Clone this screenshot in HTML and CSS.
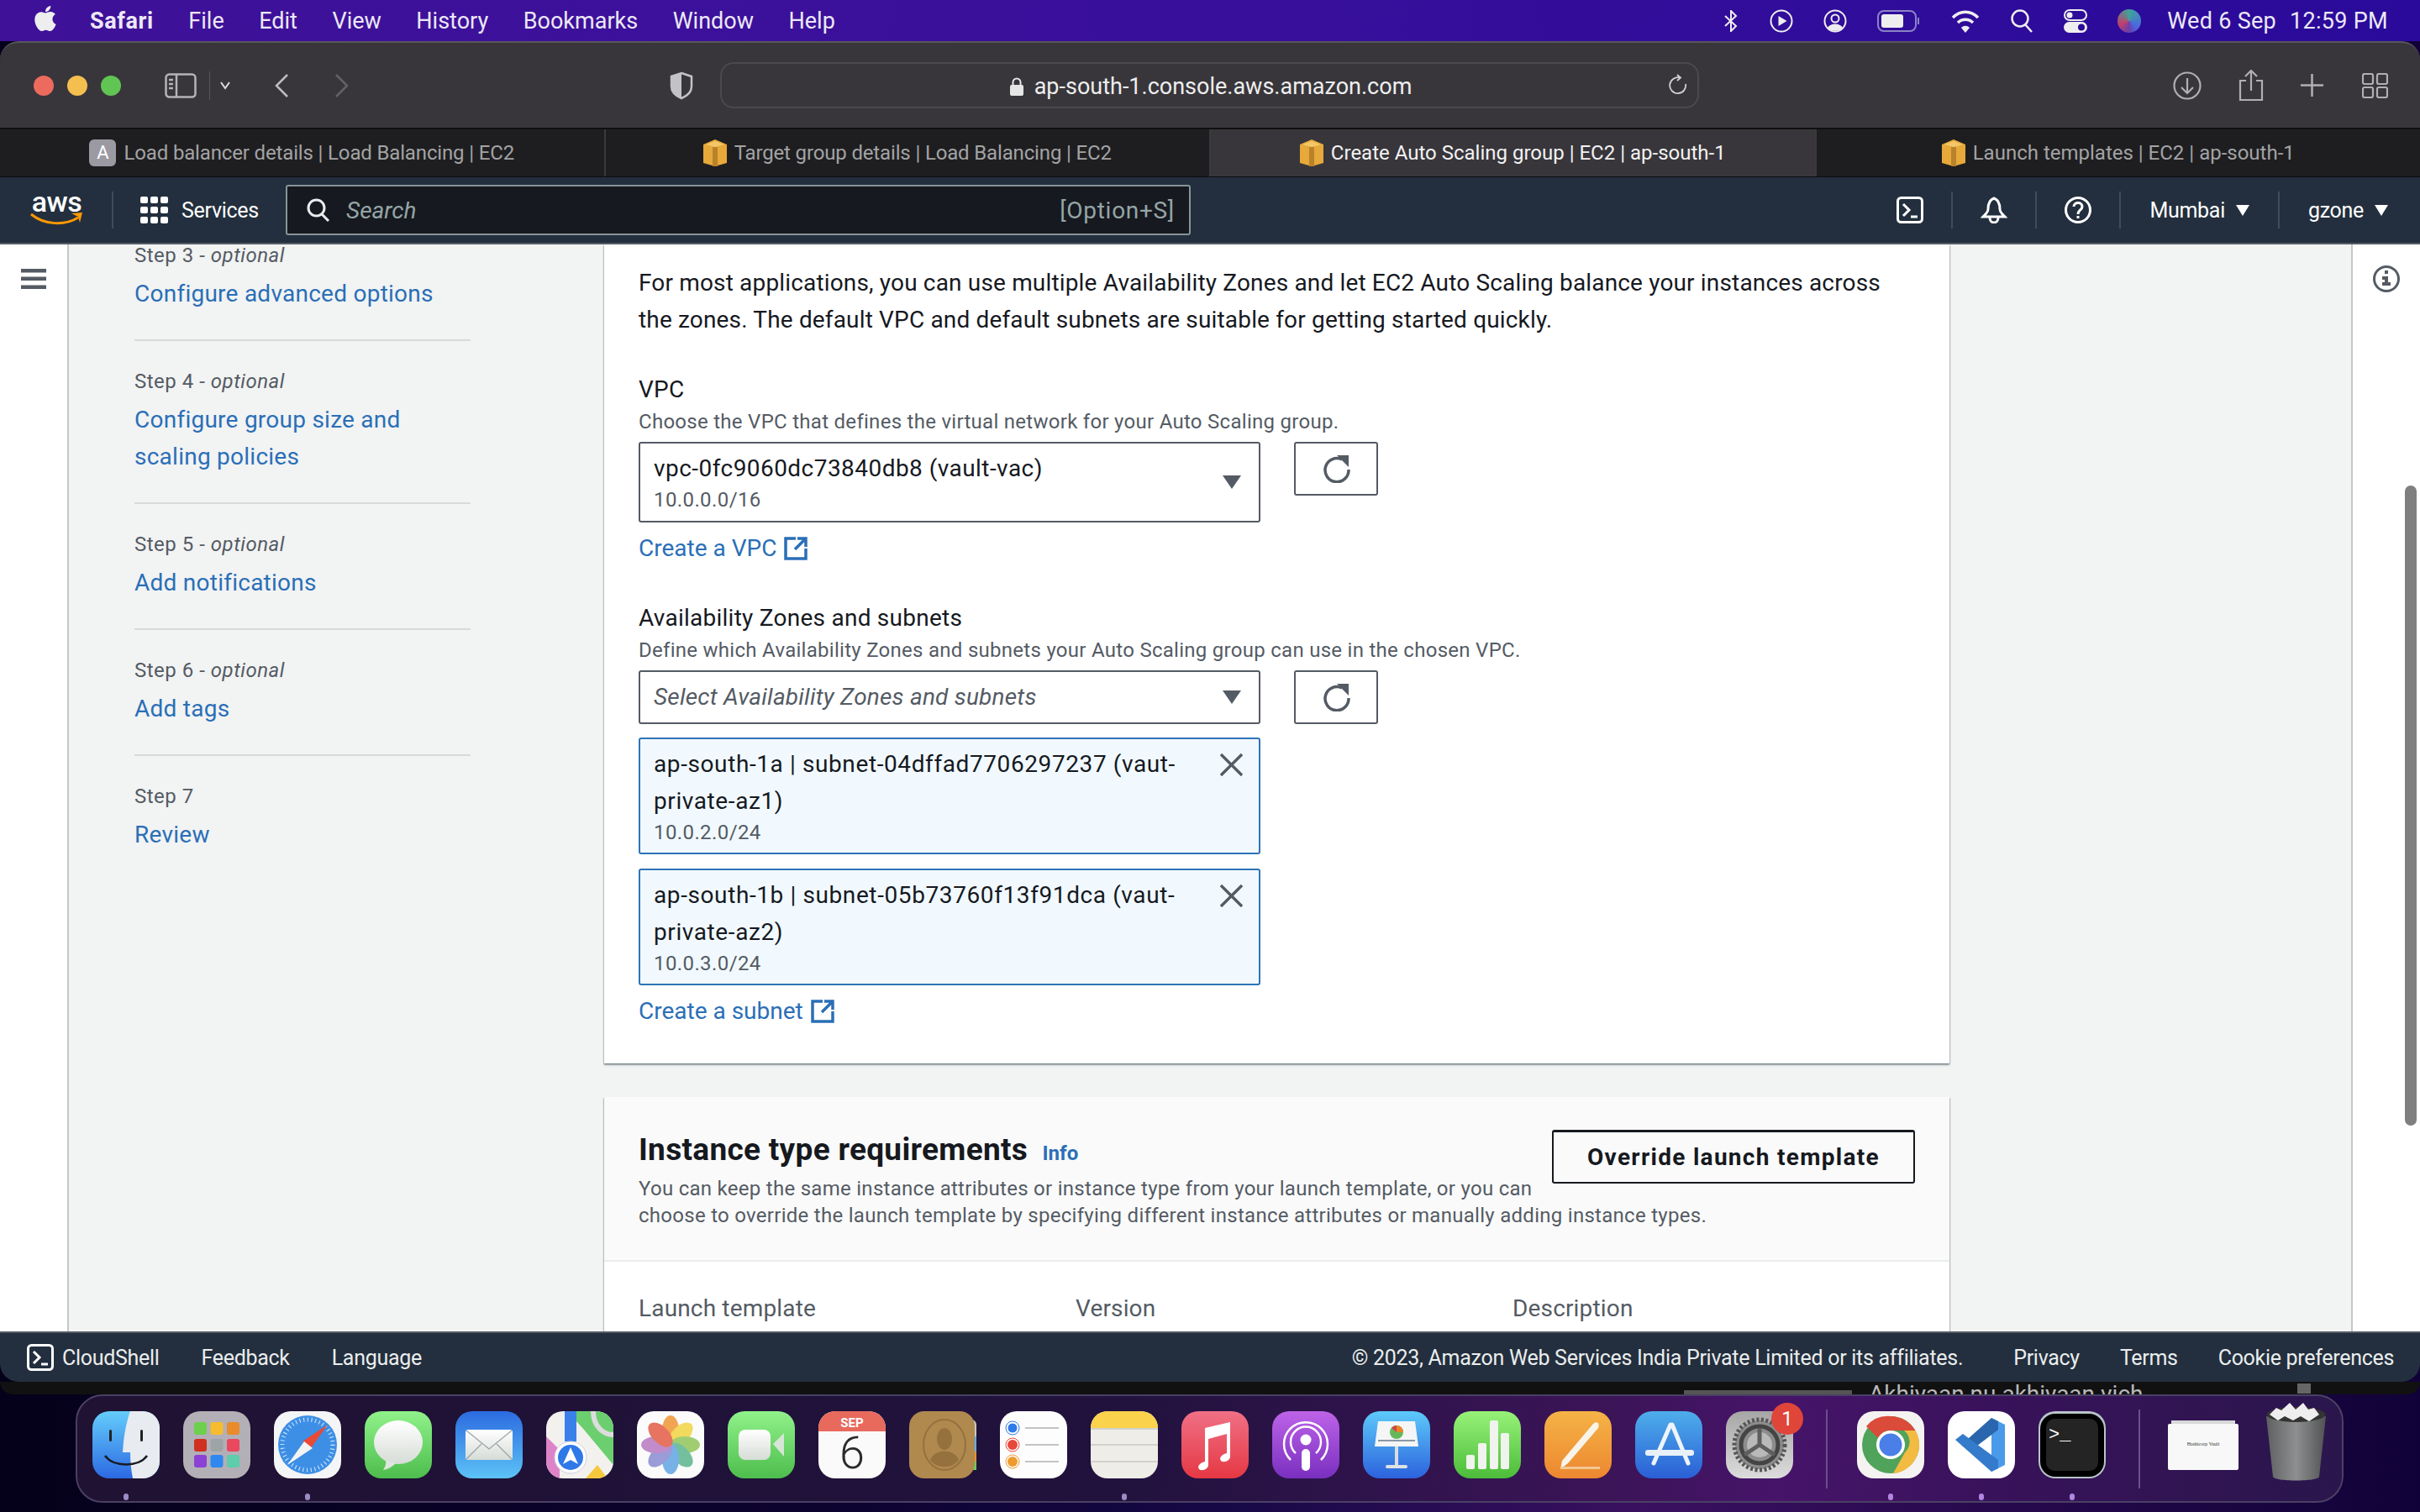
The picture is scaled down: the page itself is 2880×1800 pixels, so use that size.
FILE: index.html
```html
<!DOCTYPE html>
<html lang="en">
<head>
<meta charset="utf-8">
<title>Create Auto Scaling group | EC2 | ap-south-1</title>
<link rel="stylesheet" href="styles.css">
</head>
<body>
<header class="menubar">
  <svg class="apple" viewBox="0 0 24 24"><path fill="#eee" d="M17.05 20.28c-.98.95-2.05.8-3.08.35-1.09-.46-2.09-.48-3.24 0-1.44.62-2.2.44-3.06-.35C2.79 15.25 3.51 7.59 9.05 7.31c1.35.07 2.29.74 3.08.8 1.18-.24 2.31-.93 3.57-.84 1.51.12 2.65.72 3.4 1.8-3.12 1.87-2.38 5.98.48 7.13-.57 1.5-1.31 2.99-2.54 4.09zM12.03 7.25c-.15-2.23 1.66-4.07 3.74-4.25.29 2.58-2.34 4.5-3.74 4.25z"/></svg>
  <b class="menu-app">Safari</b><span>File</span><span>Edit</span><span>View</span><span>History</span><span>Bookmarks</span><span>Window</span><span>Help</span>
  <div class="status">
    <svg width="20" height="26" viewBox="0 0 20 26" fill="none" stroke="#eee" stroke-width="2"><path d="M3 7l13 12-6 6V1l6 6L3 19"/></svg>
    <svg width="28" height="28" viewBox="0 0 28 28" fill="none" stroke="#eee" stroke-width="2"><circle cx="14" cy="14" r="12.5"/><path fill="#eee" stroke="none" d="M10.500 8l10 6-10 6z"/></svg>
    <svg width="28" height="28" viewBox="0 0 28 28" fill="none" stroke="#eee" stroke-width="2"><circle cx="14" cy="14" r="12.500"/><circle cx="14" cy="11" r="4.500"/><path fill="#eee" stroke="none" d="M5 22c3-6 15-6 18 0-4 5-14 5-18 0z"/></svg>
    <svg width="52" height="26" viewBox="0 0 52 26" fill="none"><rect x="1" y="1" width="45" height="24" rx="7" stroke="#8b83c4" stroke-width="2"/><rect x="5" y="5" width="26" height="16" rx="3" fill="#eee"/><rect x="48" y="9" width="2" height="8" fill="#8b83c4"/></svg>
    <svg width="34" height="28" viewBox="0 0 34 28" fill="none" stroke="#eee" stroke-width="3.500"><path d="M2 10c9-9 21-9 30 0M8 16c5-5 13-5 18 0"/><path fill="#eee" stroke="none" d="M17 28l-5-6c3-3 7-3 10 0z"/></svg>
    <svg width="28" height="28" viewBox="0 0 28 28" fill="none" stroke="#eee" stroke-width="2.500"><circle cx="12" cy="11" r="9.500"/><path d="M18 18l8 9"/></svg>
    <svg width="28" height="28" viewBox="0 0 28 28"><rect x="1" y="1" width="26" height="12" rx="6" fill="none" stroke="#eee" stroke-width="2"/><circle cx="7" cy="7" r="3.500" fill="#eee"/><rect y="15" width="28" height="13" rx="6.500" fill="#eee"/><circle cx="21" cy="21.500" r="4" fill="#2a0a9a"/></svg>
    <span class="siri"></span>
    <span class="clock">Wed 6 Sep</span><span class="clock">12:59 PM</span>
  </div>
</header>

<div class="window">
  <div class="toolbar">
    <i class="light red"></i><i class="light yellow"></i><i class="light green"></i>
    <svg class="tb-sidebar" width="38" height="30" viewBox="0 0 38 30" fill="none" stroke="#b4b4b6" stroke-width="2.500"><rect x="1.500" y="1.500" width="35" height="27" rx="4"/><path d="M14 2v26M5 8h5M5 13h5M5 18h5"/></svg>
    <i class="tb-sep"></i>
    <svg class="tb-chev" width="12" height="10" viewBox="0 0 12 10" fill="none" stroke="#dcdcdc" stroke-width="2"><path d="M1 1l5 7 5-7"/></svg>
    <svg class="tb-back" width="16" height="28" viewBox="0 0 16 28" fill="none" stroke="#bdbdbf" stroke-width="2.500"><path d="M15 1L2 14l13 13"/></svg>
    <svg class="tb-fwd" width="16" height="28" viewBox="0 0 16 28" fill="none" stroke="#636265" stroke-width="2.500"><path d="M1 1l13 13L1 27"/></svg>
    <svg class="tb-shield" width="28" height="34" viewBox="0 0 28 34"><path fill="#38363b" stroke="#c3c3c7" stroke-width="2.500" d="M14 2l12 4v12c0 7-5 11-12 14-7-3-12-7-12-14V6z"/><path fill="#c3c3c7" d="M14 2L2 6v12c0 7 5 11 12 14z"/></svg>
    <div class="urlbar">
      <div class="url">
        <svg width="18" height="22" viewBox="0 0 18 22"><path fill="none" stroke="#e6e6e6" stroke-width="2" d="M4.500 10V6a4.500 4.500 0 019 0v4"/><rect x="1" y="9" width="16" height="13" rx="2" fill="#e6e6e6"/></svg>
        <span>ap-south-1.console.aws.amazon.com</span>
      </div>
      <svg class="reload" width="22" height="26" viewBox="0 0 22 26" fill="none" stroke="#d0d0d2" stroke-width="1.800"><path d="M13 4.500A9.500 9.500 0 1 0 20 12M10 1l4 3.500L10 8"/></svg>
    </div>
    <svg class="tb-dl" width="34" height="34" viewBox="0 0 34 34" fill="none" stroke="#b0b0b2" stroke-width="2.200"><circle cx="17" cy="17" r="15.500"/><path d="M17 8v18M10 19l7 7 7-7"/></svg>
    <svg class="tb-share" width="30" height="38" viewBox="0 0 30 38" fill="none" stroke="#b0b0b2" stroke-width="2.200"><path d="M9 13H2v23h26V13h-7M15 25V2M8 8l7-7 7 7"/></svg>
    <svg class="tb-plus" width="27" height="27" viewBox="0 0 27 27" fill="none" stroke="#b0b0b2" stroke-width="2.500"><path d="M13.500 0v27M0 13.500h27"/></svg>
    <svg class="tb-grid" width="31" height="30" viewBox="0 0 31 30" fill="none" stroke="#b0b0b2" stroke-width="2.200"><rect x="1" y="1" width="12" height="12" rx="2"/><rect x="18" y="1" width="12" height="12" rx="2"/><rect x="1" y="17" width="12" height="12" rx="2"/><rect x="18" y="17" width="12" height="12" rx="2"/></svg>
  </div>

  <div class="tabs">
    <div class="tab"><i class="tile">A</i><span>Load balancer details | Load Balancing | EC2</span></div>
    <div class="tab"><svg class="cube" viewBox="0 0 28 32"><path fill="#e6a93a" d="M14 0l14 6v22l-14 4-14-4V6z"/><path fill="#b9822a" d="M11 9h6v23h-6z"/><path fill="#f3c768" d="M14 2l11 4-11 3L3 6z"/></svg><span>Target group details | Load Balancing | EC2</span></div>
    <div class="tab active"><svg class="cube" viewBox="0 0 28 32"><path fill="#e6a93a" d="M14 0l14 6v22l-14 4-14-4V6z"/><path fill="#b9822a" d="M11 9h6v23h-6z"/><path fill="#f3c768" d="M14 2l11 4-11 3L3 6z"/></svg><span>Create Auto Scaling group | EC2 | ap-south-1</span></div>
    <div class="tab"><svg class="cube" viewBox="0 0 28 32"><path fill="#e6a93a" d="M14 0l14 6v22l-14 4-14-4V6z"/><path fill="#b9822a" d="M11 9h6v23h-6z"/><path fill="#f3c768" d="M14 2l11 4-11 3L3 6z"/></svg><span>Launch templates | EC2 | ap-south-1</span></div>
  </div>

  <nav class="awsnav">
    <div class="logo"><span>aws</span><svg width="63" height="16" viewBox="0 0 63 16" fill="none"><path stroke="#f90" stroke-width="3" d="M1 2c16 13 40 14 56 4"/><path fill="#f90" d="M49 1l13-1-3 12-2-7z"/></svg></div>
    <i class="nav-sep"></i>
    <svg class="nav-grid" width="33" height="32" viewBox="0 0 33 32" fill="#fff"><rect width="9" height="8" rx="2"/><rect x="12" width="9" height="8" rx="2"/><rect x="24" width="9" height="8" rx="2"/><rect y="12" width="9" height="8" rx="2"/><rect x="12" y="12" width="9" height="8" rx="2"/><rect x="24" y="12" width="9" height="8" rx="2"/><rect y="24" width="9" height="8" rx="2"/><rect x="12" y="24" width="9" height="8" rx="2"/><rect x="24" y="24" width="9" height="8" rx="2"/></svg>
    <span class="services">Services</span>
    <div class="search">
      <svg width="28" height="28" viewBox="0 0 28 28" fill="none" stroke="#eaeded" stroke-width="3"><circle cx="11.500" cy="11.500" r="9.500"/><path d="M18 19l8 8"/></svg>
      <em>Search</em><span>[Option+S]</span>
    </div>
    <div class="nav-right">
      <svg width="32" height="32" viewBox="0 0 32 32" fill="none" stroke="#fff" stroke-width="3"><rect x="1.500" y="1.500" width="29" height="29" rx="4"/><path d="M8 9l7 7-7 7M17 24h8"/></svg>
      <i class="nav-sep"></i>
      <svg width="32" height="32" viewBox="0 0 32 32" fill="none" stroke="#fff" stroke-width="3"><path d="M16 2c-6 2-7 8-7 13 0 4-3 6-6 9h26c-3-3-6-5-6-9 0-5-1-11-7-13zM11 25c0 8 10 8 10 0"/></svg>
      <i class="nav-sep"></i>
      <svg width="32" height="32" viewBox="0 0 32 32" fill="none" stroke="#fff" stroke-width="3"><circle cx="16" cy="16" r="14.500"/><path d="M11 12c0-6 10-6 10 0 0 4-5 4-5 9"/><path d="M16 23v3"/></svg>
      <i class="nav-sep"></i>
      <span class="menu-pick">Mumbai<i class="caret-w"></i></span>
      <i class="nav-sep"></i>
      <span class="menu-pick">gzone<i class="caret-w"></i></span>
    </div>
  </nav>

  <div class="console">
    <aside class="rail">
      <svg width="30" height="24" viewBox="0 0 30 24" fill="#545b64"><rect width="30" height="4.500"/><rect y="9.500" width="30" height="4.500"/><rect y="19.500" width="30" height="4.500"/></svg>
    </aside>
    <div class="centre">
      <ol class="steps">
        <li><small>Step 3 - <em>optional</em></small><a>Configure advanced options</a></li>
        <li><small>Step 4 - <em>optional</em></small><a>Configure group size and<br>scaling policies</a></li>
        <li><small>Step 5 - <em>optional</em></small><a>Add notifications</a></li>
        <li><small>Step 6 - <em>optional</em></small><a>Add tags</a></li>
        <li class="last"><small>Step 7</small><a>Review</a></li>
      </ol>
      <main class="main">
        <section class="card net">
          <p>For most applications, you can use multiple Availability Zones and let EC2 Auto Scaling balance your instances across<br>the zones. The default VPC and default subnets are suitable for getting started quickly.</p>
          <h3 class="label first">VPC</h3>
          <p class="desc">Choose the VPC that defines the virtual network for your Auto Scaling group.</p>
          <div class="pick-row">
            <div class="select">
              <div class="line">vpc-0fc9060dc73840db8 (vault-vac)</div>
              <div class="sub">10.0.0.0/16</div>
              <i class="caret"></i>
            </div>
            <button class="refresh"><svg width="34" height="34" viewBox="0 0 34 34" fill="none" stroke="#545b64" stroke-width="3.500"><path d="M24 6a14 14 0 1 0 8 12"/><path fill="#545b64" stroke="none" d="M18 1h14v14z"/></svg></button>
          </div>
          <a class="ext">Create a VPC<svg width="28" height="28" viewBox="0 0 28 28" fill="none" stroke="#2a6fb7" stroke-width="3.500"><path d="M14 2H2v24h24V14M13 15L25 3M16 2h10v10"/></svg></a>
          <h3 class="label">Availability Zones and subnets</h3>
          <p class="desc">Define which Availability Zones and subnets your Auto Scaling group can use in the chosen VPC.</p>
          <div class="pick-row">
            <div class="select short">
              <div class="line placeholder">Select Availability Zones and subnets</div>
              <i class="caret"></i>
            </div>
            <button class="refresh"><svg width="34" height="34" viewBox="0 0 34 34" fill="none" stroke="#545b64" stroke-width="3.500"><path d="M24 6a14 14 0 1 0 8 12"/><path fill="#545b64" stroke="none" d="M18 1h14v14z"/></svg></button>
          </div>
          <div class="token">
            <div class="line wide-line">ap-south-1a | subnet-04dffad7706297237 (vaut-<br>private-az1)</div>
            <div class="sub">10.0.2.0/24</div>
            <svg class="close" width="27" height="27" viewBox="0 0 28 28" fill="none" stroke="#545b64" stroke-width="3.500"><path d="M1 1l26 26M27 1L1 27"/></svg>
          </div>
          <div class="token">
            <div class="line wide-line">ap-south-1b | subnet-05b73760f13f91dca (vaut-<br>private-az2)</div>
            <div class="sub">10.0.3.0/24</div>
            <svg class="close" width="27" height="27" viewBox="0 0 28 28" fill="none" stroke="#545b64" stroke-width="3.500"><path d="M1 1l26 26M27 1L1 27"/></svg>
          </div>
          <a class="ext">Create a subnet<svg width="28" height="28" viewBox="0 0 28 28" fill="none" stroke="#2a6fb7" stroke-width="3.500"><path d="M14 2H2v24h24V14M13 15L25 3M16 2h10v10"/></svg></a>
        </section>
        <section class="card reqs">
          <header class="reqs-head">
            <button class="override">Override launch template</button>
            <h2>Instance type requirements <a>Info</a></h2>
            <p class="desc">You can keep the same instance attributes or instance type from your launch template, or you can<br>choose to override the launch template by specifying different instance attributes or manually adding instance types.</p>
          </header>
          <div class="cols"><span>Launch template</span><span>Version</span><span>Description</span></div>
        </section>
      </main>
    </div>
    <aside class="tools">
      <svg width="32" height="32" viewBox="0 0 32 32"><circle cx="16" cy="16" r="14.500" fill="none" stroke="#545b64" stroke-width="3"/><path fill="#545b64" d="M14 6h4v4h-4zM11 13h7v7h3v4H11v-4h3v-3h-3z"/></svg>
    </aside>
    <i class="scrollbar"></i>
  </div>

  <footer class="foot">
    <svg width="32" height="32" viewBox="0 0 32 32" fill="none" stroke="#fff" stroke-width="3"><rect x="1.500" y="1.500" width="29" height="29" rx="4"/><path d="M8 9l7 7-7 7M17 24h8"/></svg>
    <span class="foot-cs">CloudShell</span><span class="foot-fb">Feedback</span><span class="foot-lang">Language</span>
    <div class="foot-right"><span class="copy">© 2023, Amazon Web Services India Private Limited or its affiliates.</span><span class="wide">Privacy</span><span>Terms</span><span>Cookie preferences</span></div>
  </footer>
</div>

<div class="behind"><span class="bits"></span><span class="behind-text">Akhiyaan nu akhiyaan vich</span><i class="behind-square"></i></div>

<nav class="dock">
  <div class="app"><svg viewBox="0 0 80 80"><defs><linearGradient id="finder" x1="0" y1="0" x2="0" y2="1"><stop offset="0" stop-color="#64cdfb"/><stop offset="1" stop-color="#2c69e2"/></linearGradient><linearGradient id="greenG" x1="0" y1="0" x2="0" y2="1"><stop offset="0" stop-color="#90f28a"/><stop offset="1" stop-color="#4dbd4d"/></linearGradient><linearGradient id="blueG" x1="0" y1="0" x2="0" y2="1"><stop offset="0" stop-color="#2c6be0"/><stop offset="1" stop-color="#5cc3f6"/></linearGradient><linearGradient id="blueD" x1="0" y1="0" x2="0" y2="1"><stop offset="0" stop-color="#5dcafa"/><stop offset="1" stop-color="#2c62dd"/></linearGradient><linearGradient id="whiteG" x1="0" y1="0" x2="0" y2="1"><stop offset="0" stop-color="#fff"/><stop offset="1" stop-color="#d6dcd6"/></linearGradient></defs><rect width="80" height="80" rx="20" fill="url(#finder)"/><path fill="#e8ebef" d="M45 0h15a20 20 0 0120 20v40a20 20 0 01-20 20H48c-2-10-3-20-3-31H36C37 30 40 14 45 0z"/><rect x="20" y="22" width="3" height="14" rx="1.500" fill="#222"/><rect x="57" y="22" width="3" height="14" rx="1.500" fill="#222"/><path d="M15 53c10 14 40 14 50 0" fill="none" stroke="#1a1a22" stroke-width="2.500"/></svg><i class="dot"></i></div>
  <div class="app"><svg viewBox="0 0 80 80"><rect width="80" height="80" rx="20" fill="#b3afb6"/><rect x="13" y="13" width="15" height="15" rx="3" fill="#6dd04c"/><rect x="32.500" y="13" width="15" height="15" rx="3" fill="#f6bb2f"/><rect x="52" y="13" width="15" height="15" rx="3" fill="#e98b2a"/><rect x="13" y="33" width="15" height="15" rx="3" fill="#d0301f"/><rect x="32.500" y="33" width="15" height="15" rx="3" fill="#9da4a6"/><rect x="52" y="33" width="15" height="15" rx="3" fill="#e9485f"/><rect x="13" y="52" width="15" height="15" rx="3" fill="#8b40d6"/><rect x="32.500" y="52" width="15" height="15" rx="3" fill="#2f88f0"/><rect x="52" y="52" width="15" height="15" rx="3" fill="#5dcdaa"/></svg></div>
  <div class="app"><svg viewBox="0 0 80 80"><rect width="80" height="80" rx="20" fill="#f4f5f6"/><circle cx="40" cy="40" r="35" fill="#3d8fe6"/><circle cx="40" cy="40" r="30" fill="none" stroke="#d8ecfb" stroke-width="5" stroke-dasharray="1 3.700"/><path fill="#e84a36" d="M64 16L34 36l10 8z"/><path fill="#f4f4f4" d="M16 64l30-20-10-8z"/></svg><i class="dot"></i></div>
  <div class="app"><svg viewBox="0 0 80 80"><rect width="80" height="80" rx="20" fill="url(#greenG)"/><ellipse cx="40" cy="37" rx="29" ry="26" fill="url(#whiteG)"/><path fill="#dfe6de" d="M25 58c1 5-1 9-3 12 6-1 11-4 15-8z"/></svg></div>
  <div class="app"><svg viewBox="0 0 80 80"><rect width="80" height="80" rx="20" fill="url(#blueG)"/><rect x="12" y="22" width="56" height="36" rx="3" fill="url(#whiteG)"/><path d="M13 23l27 22 27-22M13 57l18-18M67 57L49 39" fill="none" stroke="#9ba3a8" stroke-width="1.200"/></svg></div>
  <div class="app"><svg viewBox="0 0 80 80"><clipPath id="tile"><rect width="80" height="80" rx="20"/></clipPath><g clip-path="url(#tile)"><rect width="80" height="80" fill="#f2f1ee"/><path fill="#6ccf6f" d="M0 0h80v64L45 22 25 0z"/><path fill="#dd84c8" d="M0 30l16 16v34H0z"/><path fill="#f4c93c" d="M47 80l14-16 12 16z"/><path fill="none" stroke="#dcdcdc" stroke-width="6" d="M56 0c0 18 12 28 24 28"/><path fill="#3b80ea" d="M22 0h14v36H22z"/><circle cx="29" cy="55" r="19" fill="#fff" stroke="#ccd" stroke-width="1"/><circle cx="29" cy="55" r="15" fill="#2f78e8"/><path fill="#fff" d="M29 43l9 20-9-5-9 5z"/></g></svg></div>
  <div class="app"><svg viewBox="0 0 80 80"><rect width="80" height="80" rx="20" fill="#fbfbfb"/><g opacity=".82"><ellipse cx="40" cy="23" rx="10" ry="18" fill="#f0932e"/><ellipse cx="40" cy="23" rx="10" ry="18" fill="#f2d23c" transform="rotate(45 40 40)"/><ellipse cx="40" cy="23" rx="10" ry="18" fill="#8ec454" transform="rotate(90 40 40)"/><ellipse cx="40" cy="23" rx="10" ry="18" fill="#56b38a" transform="rotate(135 40 40)"/><ellipse cx="40" cy="23" rx="10" ry="18" fill="#5aa3e2" transform="rotate(180 40 40)"/><ellipse cx="40" cy="23" rx="10" ry="18" fill="#8488d0" transform="rotate(225 40 40)"/><ellipse cx="40" cy="23" rx="10" ry="18" fill="#b674c0" transform="rotate(270 40 40)"/><ellipse cx="40" cy="23" rx="10" ry="18" fill="#e2573f" transform="rotate(315 40 40)"/></g></svg></div>
  <div class="app"><svg viewBox="0 0 80 80"><rect width="80" height="80" rx="20" fill="url(#greenG)"/><rect x="13" y="22" width="38" height="36" rx="8" fill="url(#whiteG)"/><path fill="#d6e6d6" d="M54 39l13-13v28z"/></svg></div>
  <div class="app"><svg viewBox="0 0 80 80"><clipPath id="cal"><rect width="80" height="80" rx="20"/></clipPath><g clip-path="url(#cal)"><rect width="80" height="80" fill="#fafafa"/><rect width="80" height="24" fill="#e76a5d"/></g><text x="40" y="19" text-anchor="middle" class="cal-m">SEP</text><text x="40" y="68" text-anchor="middle" class="cal-d">6</text></svg></div>
  <div class="app"><svg viewBox="0 0 80 80"><rect x="60" y="10" width="20" height="60" rx="6" fill="#c9c7c2"/><rect x="76" y="30" width="4" height="18" fill="#5fb0ee"/><rect x="76" y="48" width="4" height="12" fill="#f0902c"/><rect x="76" y="60" width="4" height="10" fill="#6acc5a"/><rect width="78" height="80" rx="18" fill="#b0894f"/><ellipse cx="42" cy="40" rx="25" ry="30" fill="none" stroke="#94713d" stroke-width="2"/><ellipse cx="42" cy="33" rx="9" ry="13" fill="#94713d"/><path fill="#94713d" d="M25 58c6-14 28-14 34 0-8 11-26 11-34 0z"/></svg></div>
  <div class="app"><svg viewBox="0 0 80 80"><rect width="80" height="80" rx="20" fill="#fdfdfd"/><circle cx="15" cy="20" r="6" fill="#2f7be8" stroke="#fff" stroke-width="1"/><circle cx="15" cy="20" r="8" fill="none" stroke="#2f7be8"/><circle cx="15" cy="40" r="6" fill="#e8483a"/><circle cx="15" cy="40" r="8" fill="none" stroke="#e8483a"/><circle cx="15" cy="60" r="6" fill="#ef9a2e"/><circle cx="15" cy="60" r="8" fill="none" stroke="#ef9a2e"/><path d="M30 20h40M30 40h40M30 60h40" stroke="#c3c3c3" stroke-width="2"/></svg></div>
  <div class="app"><svg viewBox="0 0 80 80"><clipPath id="notes"><rect width="80" height="80" rx="20"/></clipPath><g clip-path="url(#notes)"><rect width="80" height="80" fill="#eeede8"/><rect width="80" height="20" fill="#fbd24b"/><path d="M0 21h80M0 40h80M0 60h80" stroke="#c9c8c3" stroke-width="1.500"/></g></svg><i class="dot"></i></div>
  <div class="app"><svg viewBox="0 0 80 80"><defs><linearGradient id="music" x1="0" y1="0" x2="0" y2="1"><stop offset="0" stop-color="#f07085"/><stop offset="1" stop-color="#e53843"/></linearGradient></defs><rect width="80" height="80" rx="20" fill="url(#music)"/><path fill="#fff" d="M58 13v41c0 5-8 8-11 5-3-4 2-8 7-9V27l-22 6v31c0 5-8 8-11 5-3-4 2-8 7-9V20z"/></svg></div>
  <div class="app"><svg viewBox="0 0 80 80"><defs><linearGradient id="pod" x1="0" y1="0" x2="0" y2="1"><stop offset="0" stop-color="#bd63e8"/><stop offset="1" stop-color="#7a2fc0"/></linearGradient></defs><rect width="80" height="80" rx="20" fill="url(#pod)"/><g fill="none" stroke="#fff" stroke-width="2.500"><path d="M22 58a26 26 0 1 1 36 0"/><path d="M28 50a18 18 0 1 1 24 0"/></g><circle cx="40" cy="34" r="6.500" fill="#fff"/><rect x="35" y="45" width="10" height="26" rx="5" fill="#fff"/></svg></div>
  <div class="app"><svg viewBox="0 0 80 80"><rect width="80" height="80" rx="20" fill="url(#blueD)"/><rect x="38" y="30" width="4" height="36" fill="#d8dde0"/><rect x="27" y="64" width="26" height="4" rx="2" fill="#dfe2e4"/><path fill="#f4f5f5" d="M18 12h44l4 30H14z"/><circle cx="40" cy="25" r="8" fill="#65b85a"/><path fill="#e8852a" d="M40 17a8 8 0 018 8h-8z"/><path fill="#d5434a" d="M40 17a8 8 0 00-6 3l6 5z"/><rect x="18" y="34" width="44" height="2" fill="#8a9aa8"/></svg></div>
  <div class="app"><svg viewBox="0 0 80 80"><defs><linearGradient id="num" x1="0" y1="0" x2="0" y2="1"><stop offset="0" stop-color="#97f278"/><stop offset="1" stop-color="#4cbc3a"/></linearGradient></defs><rect width="80" height="80" rx="20" fill="url(#num)"/><g fill="#f0f3ee"><rect x="15" y="52" width="10" height="17" rx="2"/><rect x="29" y="38" width="10" height="31" rx="2"/><rect x="43" y="11" width="10" height="58" rx="2"/><rect x="56" y="26" width="10" height="43" rx="2"/></g></svg></div>
  <div class="app"><svg viewBox="0 0 80 80"><defs><linearGradient id="pages" x1="0" y1="0" x2="0" y2="1"><stop offset="0" stop-color="#f5b346"/><stop offset="1" stop-color="#ec8730"/></linearGradient></defs><rect width="80" height="80" rx="20" fill="url(#pages)"/><path fill="#f8f4ea" d="M58 15c5-4 8 0 6 5L28 62l-9 7 2-10z"/><rect x="20" y="66" width="46" height="3" fill="#f3c792"/></svg></div>
  <div class="app"><svg viewBox="0 0 80 80"><defs><linearGradient id="store" x1="0" y1="0" x2="0" y2="1"><stop offset="0" stop-color="#4eaeeb"/><stop offset="1" stop-color="#2a5fd6"/></linearGradient></defs><rect width="80" height="80" rx="20" fill="url(#store)"/><g stroke="#eef4fa" stroke-width="5" stroke-linecap="round"><path d="M44 16l19 46"/><path d="M42 16L22 62"/></g><rect x="12" y="46" width="58" height="7" rx="3" fill="#e8f0f8"/></svg></div>
  <div class="app"><svg viewBox="0 0 80 80"><defs><linearGradient id="prefs" x1="0" y1="0" x2="0" y2="1"><stop offset="0" stop-color="#a6a6a6"/><stop offset="1" stop-color="#dcdcdc"/></linearGradient></defs><rect width="80" height="80" rx="20" fill="url(#prefs)"/><circle cx="40" cy="40" r="29" fill="#8c8c8c"/><circle cx="40" cy="40" r="30" fill="none" stroke="#555" stroke-width="5" stroke-dasharray="3 2.500"/><circle cx="40" cy="40" r="22" fill="none" stroke="#444" stroke-width="5"/><circle cx="40" cy="40" r="15" fill="#b9b9b9"/><path d="M40 40V20M40 40L22 52M40 40l18 12" stroke="#5e5e5e" stroke-width="5"/></svg><b class="badge">1</b></div>
  <i class="dock-sep"></i>
  <div class="app after-sep"><svg viewBox="0 0 80 80"><rect width="80" height="80" rx="20" fill="#f5f3f1"/><circle cx="40" cy="40" r="34" fill="#4fa35a"/><path fill="#db4b3a" d="M40 6a34 34 0 0129.400 17H40a17 17 0 00-15 9L11 18A34 34 0 0140 6z"/><path fill="#f3bb41" d="M69.400 23A34 34 0 0143 74l14-25a17 17 0 00-1-26z"/><circle cx="40" cy="40" r="17" fill="#fff"/><circle cx="40" cy="40" r="13.500" fill="#4a7fe8"/></svg><i class="dot bright"></i></div>
  <div class="app"><svg viewBox="0 0 80 80"><rect width="80" height="80" rx="20" fill="#fff"/><path fill="#4a9aea" d="M52 8l16 8v48l-16 8z"/><path fill="#2a66ad" d="M52 8l8 4v10L26 48l-10-8z"/><path fill="#347bcb" d="M52 72l8-4V58L18 27l-9 7z"/></svg><i class="dot bright"></i></div>
  <div class="app"><svg viewBox="0 0 80 80"><rect width="80" height="80" rx="20" fill="#b8c4c8"/><rect x="2" y="3" width="76" height="75" rx="18" fill="#000"/><rect x="9" y="9" width="62" height="62" rx="10" fill="#242424"/><text x="12" y="34" class="term">&gt;_</text></svg><i class="dot bright"></i></div>
  <i class="dock-sep"></i>
  <div class="doc"><svg viewBox="0 0 84 59"><rect x="4" y="0" width="76" height="8" fill="#d8d8d8"/><rect width="84" height="55" y="4" rx="2" fill="#f8f8f8"/><text x="42" y="30" text-anchor="middle" class="doc-t">Hashicorp Vault</text></svg></div>
  <div class="trash"><svg viewBox="0 0 75 93"><defs><linearGradient id="glass" x1="0" y1="0" x2="1" y2="0"><stop offset="0" stop-color="#5d5f60"/><stop offset=".5" stop-color="#8d8f90"/><stop offset="1" stop-color="#505253"/></linearGradient></defs><path fill="url(#glass)" d="M2 16h71l-8 72c-1 6-54 6-55 0z"/><ellipse cx="37.500" cy="14" rx="35" ry="9" fill="#333"/><path fill="#eee" d="M6 14l8-8 6 3 10-9 7 8 9-8 6 8 7-2 6 8-12 8-10-6-9 5-10-5-8 5z"/></svg></div>
</nav>
</body>
</html>
```

FILE: styles.css
```css
* { box-sizing: border-box; }
html, body { margin: 0; padding: 0; }
body {
  width: 2880px; height: 1800px; overflow: hidden;
  font-family: Roboto, "Liberation Sans", sans-serif;
  background: linear-gradient(90deg, #05011a 0, #0d0330 35%, #150845 50%, #3a1060 68%, #2a0a50 80%, #100238 100%);
}
i { font-style: normal; display: block; }
svg { display: block; flex: none; }

/* macOS menu bar */
.menubar {
  height: 49px; display: flex; align-items: center; gap: 41.500px;
  padding-left: 34px; color: #ece8f6; font-size: 27px;
  background: linear-gradient(90deg, #3f1199 0, #3a109b 40%, #2a0a9a 100%);
}
.apple { width: 40px; height: 40px; margin-bottom: 6px; margin-right: -8.500px; }
.menu-app { font-weight: 700; letter-spacing: .6px; }
.status { margin-left: auto; padding-right: 38px; display: flex; align-items: center; gap: 36px; }
.siri { width: 28px; height: 28px; margin-right: -5px; border-radius: 50%; background: conic-gradient(#3fa39a, #4a6ae0 35%, #6a3fb0 50%, #c0406a 70%, #3fa39a); }
.clock { letter-spacing: .3px; }
.clock + .clock { margin-left: -20px; }

/* Safari window */
.window { height: 1596px; display: flex; flex-direction: column; }
.toolbar {
  height: 105px; flex: none; display: flex; align-items: center; padding-left: 40px;
  background: #38363b; border-top: 2px solid #57565a; border-bottom: 2px solid #0f0f10;
  border-radius: 22px 22px 0 0;
}
.light { width: 24px; height: 24px; border-radius: 50%; margin-right: 16px; }
.red { background: #ec6a5e; } .yellow { background: #f4bf4f; } .green { background: #61c554; }
.tb-sidebar { margin-left: 36px; }
.tb-sep { width: 1px; height: 34px; background: #565559; margin-left: 15px; }
.tb-chev { margin-left: 12px; }
.tb-back { margin-left: 53px; }
.tb-fwd { margin-left: 56px; }
.tb-shield { margin-left: 382px; }
.urlbar {
  width: 1165px; height: 55px; margin-left: 32px; display: flex; align-items: center; justify-content: center;
  border: 2px solid #4b494e; border-radius: 16px; position: relative;
}
.url { display: flex; align-items: center; gap: 12px; color: #eeeeee; font-size: 27px; margin-left: 2px; padding-top: 2px; }
.reload { position: absolute; right: 12px; top: 12px; }
.tb-dl { margin-left: 564px; }
.tb-share { margin-left: 44px; }
.tb-plus { margin-left: 44px; }
.tb-grid { margin-left: 46px; }

.tabs { height: 57px; flex: none; display: flex; background: #1e1e20; border-bottom: 1px solid #0c0c0d; }
.tab {
  flex: 1; display: flex; align-items: center; justify-content: center; gap: 9px;
  color: #a3a3a5; font-size: 24px; letter-spacing: -.15px; border-left: 2px solid #3a3a3c;
}
.tab:first-child { border-left: 0; }
.tab.active { background: #38363b; color: #f2f2f2; }
.tab.active, .tab:last-child { letter-spacing: 0; }
.tile { width: 32px; height: 32px; border-radius: 6px; background: #9b9aa3; color: #fff; font-size: 22px; text-align: center; line-height: 32px; }
.cube { width: 28px; height: 32px; }

/* AWS console top bar */
.awsnav {
  height: 80px; flex: none; display: flex; align-items: center; padding: 0 37px 0 36px;
  background: #232f3e; border-bottom: 2px solid #545b64; color: #fff; font-size: 25px; letter-spacing: -.3px;
}
.logo { width: 63px; height: 40px; margin-top: -2px; }
.logo span { display: block; font: 500 34px/23px Roboto, sans-serif; letter-spacing: -.5px; text-align: center; }
.logo svg { margin-top: 1px; }
.nav-sep { width: 2px; height: 44px; background: #414c59; }
.logo + .nav-sep { margin-left: 34px; }
.nav-grid { margin-left: 32px; }
.services { width: 140px; padding-left: 16px; }
.search {
  width: 1077px; height: 60px; display: flex; align-items: center; padding: 0 17px 0 23px; gap: 19px;
  background: #16191f; border: 2px solid #879596; border-radius: 3px; color: #95a5a6; font-size: 28px; letter-spacing: 0;
}
.search span { margin-left: auto; letter-spacing: .7px; }
.nav-right { margin-left: auto; display: flex; align-items: center; gap: 33px; }
.menu-pick { display: flex; align-items: center; gap: 13px; margin: 0 1px; }
.caret-w { width: 0; height: 0; border: 8px solid transparent; border-top: 13px solid #fff; border-bottom: 0; }

/* Console body */
.console { height: 1294px; flex: none; display: flex; position: relative; overflow: hidden; background: #f2f3f3; }
.rail { width: 82px; flex: none; background: #fff; border-right: 2px solid #c4c8c9; padding: 29px 0 0 25px; }
.centre { flex: 1; display: flex; min-width: 0; }
.tools { width: 82px; flex: none; background: #fff; border-left: 2px solid #c4c8c9; padding: 25px 0 0 24px; }
.scrollbar { position: absolute; right: 4px; top: 287px; width: 14px; height: 762px; border-radius: 7px; background: #7f7f7f; }

.steps { list-style: none; margin: -3px 0 0; padding: 0 0 0 78px; width: 637px; flex: none; }
.steps li { width: 400px; padding-bottom: 32px; margin-bottom: 32px; border-bottom: 2px solid #d5dbdb; }
.steps li.last { border-bottom: 0; }
.steps small { display: block; font-size: 24px; line-height: 32px; color: #545b64; margin-bottom: 8px; letter-spacing: .5px; }
.steps a { display: block; font-size: 28px; line-height: 44px; color: #2a6fb7; letter-spacing: .25px; }

.main { width: 1601px; flex: none; color: #16191f; font-size: 28px; line-height: 44px; letter-spacing: .16px; }
.card { background: #fff; box-shadow: 0 2px 2px rgba(0,28,36,.35), 1px 1px 1px rgba(0,28,36,.15), -1px 1px 1px rgba(0,28,36,.15); }
.net { padding: 24px 40px 40px 41px; }
.net p { margin: 0; }
.label { font-weight: 400; font-size: 28px; line-height: 44px; margin: 39px 0 0; letter-spacing: .25px; }
.label.first { margin-top: 39px; }
.net p.desc, .desc { color: #545b64; font-size: 24px; line-height: 32px; margin: 0; letter-spacing: .28px; }
.pick-row { display: flex; gap: 40px; margin-top: 8px; align-items: flex-start; }
.select {
  width: 740px; height: 96px; padding: 8px 16px 10px; border: 2px solid #545b64; border-radius: 3px; position: relative; background: #fff;
}
.select.short { height: 64px; }
.line { line-height: 44px; letter-spacing: .45px; }
.line.wide-line { letter-spacing: .6px; }
.line.placeholder { color: #545b64; font-style: italic; letter-spacing: .2px; }
.sub { color: #545b64; font-size: 24px; line-height: 30px; letter-spacing: .4px; }
.caret { position: absolute; right: 21px; top: 38px; width: 0; height: 0; border: 11px solid transparent; border-top: 16px solid #545b64; border-bottom: 0; }
.short .caret { top: 22px; }
.refresh { width: 100px; height: 64px; padding: 0; border: 2px solid #545b64; border-radius: 3px; background: #fff; display: flex; align-items: center; justify-content: center; }
.ext { display: flex; align-items: center; gap: 9px; color: #2a6fb7; margin-top: 9px; letter-spacing: 0; }
.token {
  width: 740px; height: 139px; margin-top: 16px; padding: 8px 16px 8px; position: relative;
  background: #f1f9fe; border: 2px solid #2f73b8; border-radius: 3px;
}
.token + .token { margin-top: 17px; }
.close { position: absolute; right: 19px; top: 17px; }

.reqs { margin-top: 40px; height: 400px; }
.reqs-head { height: 196px; padding: 40px 41px 0 41px; background: #fafafa; border-bottom: 2px solid #eaeded; }
.reqs-head h2 { margin: 0; font-size: 37px; line-height: 46px; font-weight: 700; letter-spacing: .3px; }
.reqs-head h2 a { font-size: 24px; color: #2a6fb7; margin-left: 8px; letter-spacing: 0; }
.reqs-head .desc { margin-top: 3px; }
.override {
  float: right; width: 432px; height: 64px; margin: -1px 0 0; padding: 0;
  font: 700 28px Roboto, sans-serif; letter-spacing: 1.300px; color: #16191f; background: transparent; border: 2px solid #16191f; border-top-width: 3px; border-radius: 3px;
}
.cols { display: grid; grid-template-columns: 520px 520px 1fr; padding: 34px 41px 0; color: #545b64; }

/* Console footer */
.foot {
  height: 60px; flex: none; display: flex; align-items: center; padding: 0 31px 0 32px;
  background: #232f3e; border-top: 2px solid #545b64; border-radius: 0 0 22px 22px; color: #eaeded; font-size: 25px; letter-spacing: -.3px;
}
.foot-cs { margin-left: 10px; }
.foot-fb { margin-left: 50px; }
.foot-lang { margin-left: 50px; }
.foot-right { margin-left: auto; display: flex; gap: 48px; }
.foot-right .copy { letter-spacing: -.28px; }
.foot-right .wide { margin-left: 12px; }

/* Window peeking out behind Safari */
.behind {
  height: 15px; overflow: hidden; display: flex; background: #111112;
  border-radius: 0 0 22px 22px; color: #b8b8b8;
}
.bits { width: 200px; height: 5px; margin: 10px 0 0 2004px; background: #555; }
.behind-text { margin: -1px 0 0 20px; font-size: 28px; line-height: 32px; white-space: nowrap; }
.behind-square { width: 16px; height: 12px; margin: 2px 130px 0 auto; background: #666; }

/* Dock */
.dock {
  width: 2699px; height: 129px; margin: 0 0 0 90px; padding: 18px 0 0 18px; display: flex; gap: 28px; align-items: flex-start;
  border: 2px solid #4a4064; border-radius: 32px;
  background: linear-gradient(90deg, #1f1232 0, #20123c 45%, #3c1458 68%, #46146a 75%, #38125a 85%, #2a164c 100%);
}
.app { width: 80px; height: 80px; flex: none; position: relative; }
.app svg { width: 80px; height: 80px; }
.dot { position: absolute; left: 37px; bottom: -26px; width: 6px; height: 8px; border-radius: 3px; background: #9c8cc4; }
.dot.bright { background: #b286e0; }
.badge { position: absolute; right: -12px; top: -10px; width: 38px; height: 38px; border-radius: 50%; background: #e0453a; color: #fff; font: 400 24px/38px Roboto, sans-serif; text-align: center; }
.dock-sep { width: 2px; height: 94px; margin: -2px 11px 0; background: #6b4e90; }
.dock-sep + .after-sep { margin-left: -4px; }
.doc { width: 84px; height: 59px; margin: 11px 0 0 -6px; flex: none; }
.doc svg { width: 84px; height: 59px; }
.trash { width: 75px; height: 93px; margin: -10px 0 0 3px; flex: none; }
.trash svg { width: 75px; height: 93px; }
.cal-m { font: 700 15px Roboto, sans-serif; fill: #fff; }
.cal-d { font: 300 54px Roboto, sans-serif; fill: #2b2b2b; }
.term { font: 400 22px "Liberation Mono", monospace; fill: #fff; }
.doc-t { font: 6px "Liberation Serif", serif; fill: #333; }
```
